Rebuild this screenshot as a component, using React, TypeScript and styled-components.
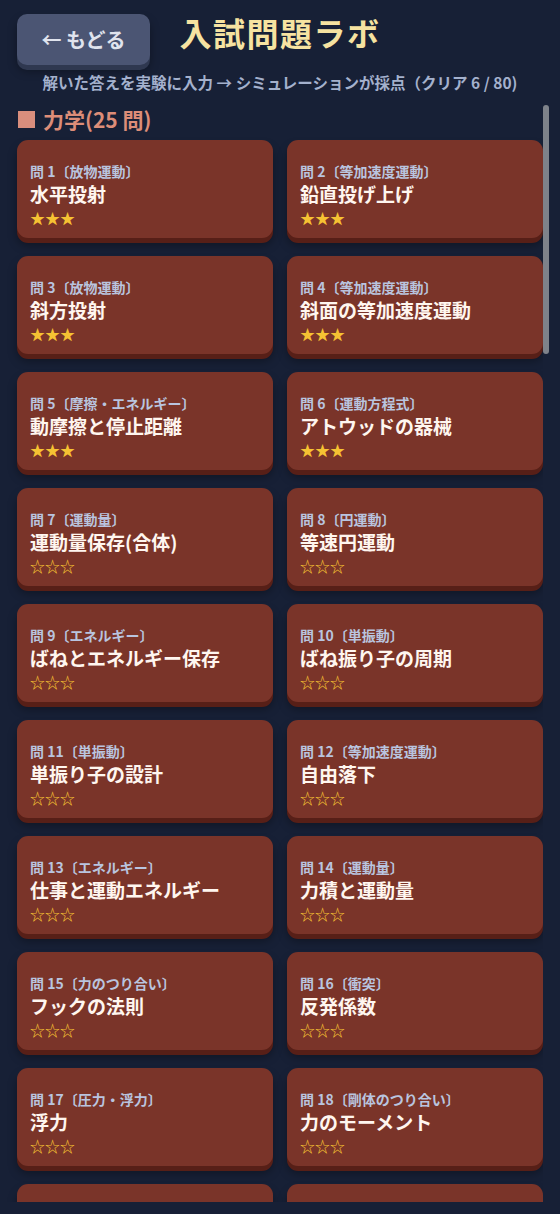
import React from 'react';
import styled, { createGlobalStyle } from 'styled-components';

const GlobalStyle = createGlobalStyle`
  html, body {
    margin: 0;
    padding: 0;
    background: #172036;
  }
  body {
    font-family: 'Noto Sans CJK JP', 'Noto Sans', sans-serif;
  }
  * {
    box-sizing: border-box;
  }
`;

const Page = styled.div`
  height: 100vh;
  display: flex;
  flex-direction: column;
  background: #172036;
  padding: 14px 0 12px 0;
`;

const Header = styled.header`
  display: grid;
  grid-template-columns: 1fr auto 1fr;
  align-items: start;
  padding: 0 17px;
`;

const BackButton = styled.button`
  justify-self: start;
  width: 133px;
  height: 51px;
  border: none;
  border-radius: 10px;
  background: #4b5573;
  box-shadow: 0 5px 0 #2f3850, 0 6px 10px rgba(0, 0, 0, 0.35);
  color: #e0e4ee;
  font-family: 'Noto Sans CJK JP', sans-serif;
  font-size: 20px;
  font-weight: 700;
  cursor: pointer;
`;

const Title = styled.h1`
  margin: -2px 0 0 0;
  color: #f6e3a1;
  font-size: 32px;
  font-weight: 700;
  letter-spacing: 1.5px;
  line-height: 40px;
`;

const Lead = styled.p`
  margin: 7px 0 0 0;
  text-align: center;
  color: #a4b1cd;
  font-size: 15.5px;
  font-weight: 700;
  line-height: 20px;
`;

const ScrollArea = styled.div`
  position: relative;
  flex: 1;
  min-height: 0;
  margin-top: 12px;
`;

const Scroller = styled.div`
  height: 100%;
  overflow-y: auto;
  scrollbar-width: none;
  margin-right: 17px;
  padding-left: 17px;

  &::-webkit-scrollbar {
    display: none;
  }
`;

// overlay scrollbar thumb, sits on the right edge of the list
const Thumb = styled.div`
  position: absolute;
  top: 1px;
  right: 11px;
  width: 6px;
  height: 249px;
  border-radius: 3px;
  background: #7e828a;
`;

const Section = styled.section`
  margin-bottom: 20px;
`;

const SectionTitle = styled.h2`
  display: flex;
  align-items: center;
  gap: 8px;
  margin: 0 0 6px 1px;
  color: #dd8d78;
  font-size: 21px;
  font-weight: 700;
  line-height: 30px;

  &::before {
    content: '';
    width: 17px;
    height: 17px;
    background: #d98e7d;
  }
`;

const Grid = styled.div`
  display: grid;
  grid-template-columns: repeat(2, 256px);
  column-gap: 14px;
  row-gap: 18px;
  padding-bottom: 8px;
`;

const Card = styled.div`
  height: 98px;
  border-radius: 11px;
  background: #7a3429;
  box-shadow: 0 5px 0 #571f17, 0 7px 10px rgba(0, 0, 0, 0.35);
  padding: 22px 13px 0 13px;
  cursor: pointer;
`;

const Label = styled.div`
  color: #b9c4df;
  font-size: 14px;
  font-weight: 700;
  line-height: 18px;
`;

const CardTitle = styled.div`
  color: #fff6ef;
  font-size: 19px;
  font-weight: 700;
  line-height: 27px;
`;

const Stars = styled.div`
  color: #f6c233;
  font-family: 'Noto Sans CJK JP', 'DejaVu Sans', sans-serif;
  font-size: 15px;
  line-height: 22px;
`;

type Problem = { topic: string; title: string };

const mechanics: Problem[] = [
  { topic: '放物運動', title: '水平投射' },
  { topic: '等加速度運動', title: '鉛直投げ上げ' },
  { topic: '放物運動', title: '斜方投射' },
  { topic: '等加速度運動', title: '斜面の等加速度運動' },
  { topic: '摩擦・エネルギー', title: '動摩擦と停止距離' },
  { topic: '運動方程式', title: 'アトウッドの器械' },
  { topic: '運動量', title: '運動量保存(合体)' },
  { topic: '円運動', title: '等速円運動' },
  { topic: 'エネルギー', title: 'ばねとエネルギー保存' },
  { topic: '単振動', title: 'ばね振り子の周期' },
  { topic: '単振動', title: '単振り子の設計' },
  { topic: '等加速度運動', title: '自由落下' },
  { topic: 'エネルギー', title: '仕事と運動エネルギー' },
  { topic: '運動量', title: '力積と運動量' },
  { topic: '力のつり合い', title: 'フックの法則' },
  { topic: '衝突', title: '反発係数' },
  { topic: '圧力・浮力', title: '浮力' },
  { topic: '剛体のつり合い', title: '力のモーメント' },
  { topic: '慣性力', title: 'エレベーター内の重さ' },
  { topic: '万有引力', title: '人工衛星の周期' },
  { topic: '円運動', title: '鉛直面内の円運動' },
  { topic: '運動量', title: '平面内の衝突' },
  { topic: '単振動', title: '単振動のエネルギー' },
  { topic: '万有引力', title: '第2宇宙速度' },
  { topic: '剛体のつり合い', title: '立てかけたはしご' },
];

const sections = [{ name: '力学', list: mechanics }];

const clearedCount = 6;

const App: React.FC = () => {
  let no = 0;

  return (
    <>
      <GlobalStyle />
      <Page>
        <Header>
          <BackButton>← もどる</BackButton>
          <Title>入試問題ラボ</Title>
          <span />
        </Header>
        <Lead>解いた答えを実験に入力 → シミュレーションが採点（クリア {clearedCount} / 80)</Lead>
        <ScrollArea>
          <Scroller>
            {sections.map((s) => (
              <Section key={s.name}>
                <SectionTitle>
                  {s.name}({s.list.length} 問)
                </SectionTitle>
                <Grid>
                  {s.list.map((p) => {
                    no += 1;
                    const cleared = no <= clearedCount;
                    return (
                      <Card key={no}>
                        <Label>
                          問 {no}〔{p.topic}〕
                        </Label>
                        <CardTitle>{p.title}</CardTitle>
                        <Stars>{cleared ? '★★★' : '☆☆☆'}</Stars>
                      </Card>
                    );
                  })}
                </Grid>
              </Section>
            ))}
          </Scroller>
          <Thumb />
        </ScrollArea>
      </Page>
    </>
  );
};

export default App;
